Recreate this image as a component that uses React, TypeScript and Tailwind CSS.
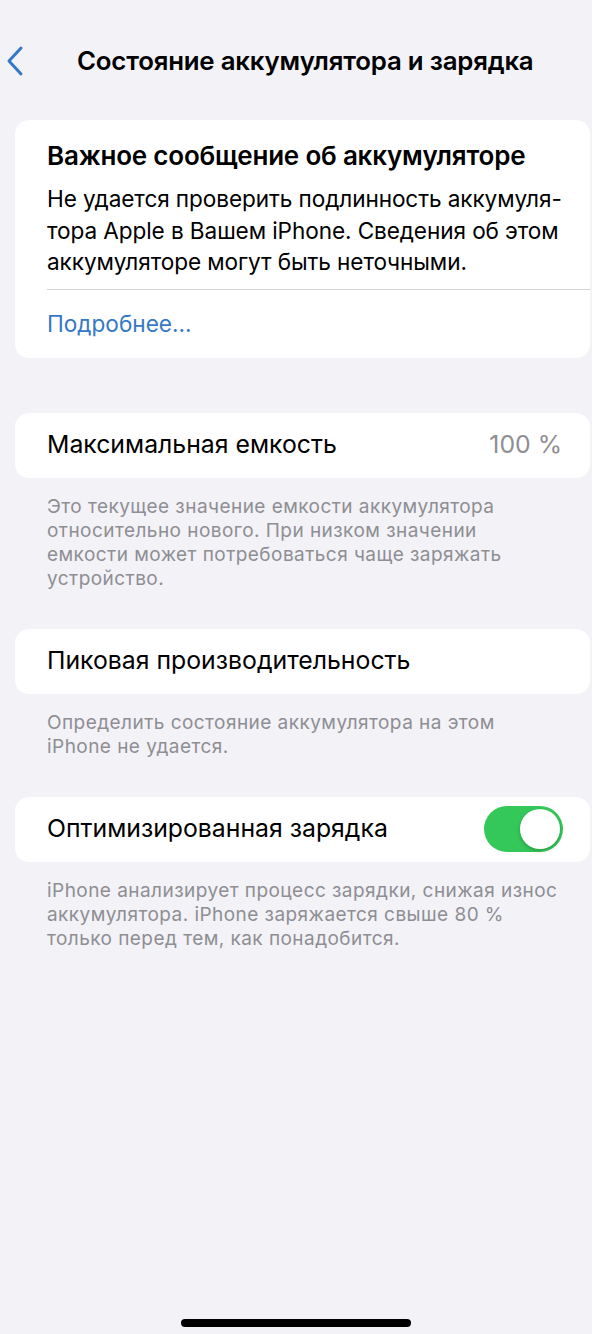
import React from "react";

const font = { fontFamily: "Inter, 'Noto Sans', sans-serif" };

function Card({ children, className = "" }: { children: React.ReactNode; className?: string }) {
  return (
    <div className={`ml-[15px] mr-[2px] rounded-[14px] bg-white ${className}`}>{children}</div>
  );
}

function Footer({ children }: { children: React.ReactNode }) {
  return (
    <div className="pl-[47px] pr-[10px] pt-[17px] text-[19px] leading-[24px] text-[#8e8e93] tracking-[0.45px] whitespace-nowrap">
      {children}
    </div>
  );
}

export default function App() {
  return (
    <div className="min-h-[1334px] w-[592px] bg-[#f2f2f7] flex flex-col text-black" style={font}>
      <div className="flex items-center h-[64px] mt-[29px] relative">
        <svg className="absolute left-[5px] top-[16px]" width="20" height="32" viewBox="0 0 20 32">
          <path d="M16 3 L4 16 L16 29" fill="none" stroke="#3478c6" strokeWidth="3" strokeLinecap="round" strokeLinejoin="round" />
        </svg>
        <div className="ml-[77px] text-[25.8px] font-semibold tracking-[-0.2px] whitespace-nowrap">Состояние аккумулятора и зарядка</div>
      </div>

      <Card className="mt-[27px] pt-[18px]">
        <div className="pl-[32px] pr-[10px] whitespace-nowrap">
          <div className="text-[26px] font-semibold leading-[36px] tracking-[-0.2px]">Важное сообщение об аккумуляторе</div>
          <div className="mt-[9px] text-[22.6px] leading-[31.5px] tracking-[-0.1px]">
            Не удается проверить подлинность аккумуля-
            <br />
            тора Apple в Вашем iPhone. Сведения об этом
            <br />
            аккумуляторе могут быть неточными.
          </div>
        </div>
        <div className="ml-[32px] mt-[11px] h-[1px] bg-[#d4d4d8]" />
        <div className="pl-[32px] h-[68px] flex items-center text-[22.6px] text-[#3478c6]">Подробнее...</div>
      </Card>

      <Card className="mt-[55px] h-[65px] flex items-center pl-[32px] pr-[28px] justify-between">
        <div className="text-[24.8px]">Максимальная емкость</div>
        <div className="text-[24.8px] text-[#8e8e93]">100 %</div>
      </Card>
      <Footer>
        Это текущее значение емкости аккумулятора
        <br />
        относительно нового. При низком значении
        <br />
        емкости может потребоваться чаще заряжать
        <br />
        устройство.
      </Footer>

      <Card className="mt-[38px] h-[65px] flex items-center pl-[32px]">
        <div className="text-[24.8px]">Пиковая производительность</div>
      </Card>
      <Footer>
        Определить состояние аккумулятора на этом
        <br />
        iPhone не удается.
      </Footer>

      <Card className="mt-[38px] h-[65px] flex items-center pl-[32px] pr-[27px] justify-between">
        <div className="text-[24.8px]">Оптимизированная зарядка</div>
        <div className="w-[79px] h-[46px] rounded-full bg-[#34c759] p-[3px] flex justify-end">
          <div className="w-[40px] h-[40px] rounded-full bg-white shadow-[0_2px_4px_rgba(0,0,0,0.2)]" />
        </div>
      </Card>
      <Footer>
        iPhone анализирует процесс зарядки, снижая износ
        <br />
        аккумулятора. iPhone заряжается свыше 80 %
        <br />
        только перед тем, как понадобится.
      </Footer>

      <div className="flex-1" />
      <div className="flex justify-center pb-[7px]">
        <div className="w-[230px] h-[8px] rounded-full bg-black" />
      </div>
    </div>
  );
}
